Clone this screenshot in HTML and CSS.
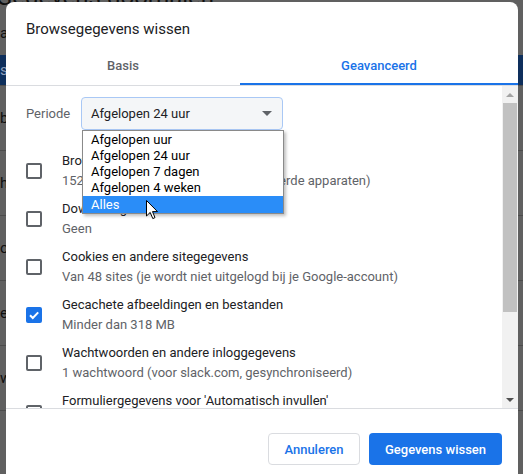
FILE: index.html
```html
<!DOCTYPE html>
<html lang="nl">
<head>
    <meta charset="UTF-8">
    <title>Browsegegevens wissen</title>
    <link rel="stylesheet" href="styles.css">
</head>
<body>
    <div class="page">
        <h1 class="page-title">Gegevens doorhalen</h1>
        <div class="page-row page-row--first">accounts</div>
        <div class="page-row page-row--blue">sync</div>
        <div class="page-row">beheer</div>
        <div class="page-row">historie</div>
        <div class="page-row">opties</div>
        <div class="page-row">extra</div>
        <div class="page-row">wachtwoorden</div>
    </div>

    <div class="dialog">
        <div class="dialog-title">Browsegegevens wissen</div>

        <div class="tabs">
            <div class="tab tab--basic">Basis</div>
            <div class="tab tab--active">Geavanceerd</div>
        </div>

        <div class="dialog-body">
            <div class="content">
                <div class="period">
                    <span class="period-label">Periode</span>
                    <div class="select">
                        <span>Afgelopen 24 uur</span>
                        <span class="select-arrow"></span>
                        <ul class="options">
                            <li>Afgelopen uur</li>
                            <li>Afgelopen 24 uur</li>
                            <li>Afgelopen 7 dagen</li>
                            <li>Afgelopen 4 weken</li>
                            <li class="selected">Alles</li>
                        </ul>
                        <svg class="cursor" width="13" height="20" viewBox="0 0 13 20">
                            <path d="M0.5 0.5 L0.5 16 L4.2 12.4 L6.8 18.6 L9 17.6 L6.5 11.6 L11.5 11.6 Z" fill="#fff" stroke="#000" stroke-width="1"/>
                        </svg>
                    </div>
                </div>

                <div class="item">
                    <span class="checkbox"></span>
                    <div class="item-text">
                        <div class="item-title">Browsegeschiedenis</div>
                        <div class="item-sub">152 items (en meer op gesynchroniseerde apparaten)</div>
                    </div>
                </div>
                <div class="item">
                    <span class="checkbox"></span>
                    <div class="item-text">
                        <div class="item-title">Downloadgeschiedenis</div>
                        <div class="item-sub">Geen</div>
                    </div>
                </div>
                <div class="item">
                    <span class="checkbox"></span>
                    <div class="item-text">
                        <div class="item-title">Cookies en andere sitegegevens</div>
                        <div class="item-sub">Van 48 sites (je wordt niet uitgelogd bij je Google-account)</div>
                    </div>
                </div>
                <div class="item">
                    <span class="checkbox checkbox--checked">
                        <svg width="12" height="12" viewBox="0 0 12 12">
                            <path d="M2 6.2 L4.8 9 L10.2 3.4" fill="none" stroke="#fff" stroke-width="2"/>
                        </svg>
                    </span>
                    <div class="item-text">
                        <div class="item-title">Gecachete afbeeldingen en bestanden</div>
                        <div class="item-sub">Minder dan 318 MB</div>
                    </div>
                </div>
                <div class="item">
                    <span class="checkbox"></span>
                    <div class="item-text">
                        <div class="item-title">Wachtwoorden en andere inloggegevens</div>
                        <div class="item-sub">1 wachtwoord (voor slack.com, gesynchroniseerd)</div>
                    </div>
                </div>
                <div class="item">
                    <span class="checkbox"></span>
                    <div class="item-text">
                        <div class="item-title">Formuliergegevens voor 'Automatisch invullen'</div>
                    </div>
                </div>
            </div>

            <div class="scrollbar">
                <span class="scroll-arrow scroll-arrow--up"></span>
                <div class="scroll-track">
                    <div class="scroll-thumb"></div>
                </div>
                <span class="scroll-arrow scroll-arrow--down"></span>
            </div>
        </div>

        <div class="dialog-footer">
            <button class="btn btn--cancel">Annuleren</button>
            <button class="btn btn--primary">Gegevens wissen</button>
        </div>
    </div>
</body>
</html>
```

FILE: styles.css
```css
:root {
    --blue: #1a73e8;
    --text: #202124;
    --muted: #5f6368;
    --line: #dadce0;
}

body {
    margin: 0;
    width: 523px;
    height: 474px;
    overflow: hidden;
    background: #606060;
    font-family: Roboto, "Liberation Sans", sans-serif;
    position: relative;
}

/* dimmed settings page behind the dialog */
.page {
    height: 474px;
    overflow: hidden;
    color: #0f0f0f;
}

.page-title {
    margin: -17px 0 0 -4px;
    height: 28px;
    font-size: 24px;
    font-weight: 400;
    line-height: 28px;
    color: #101010;
}

.page-row {
    height: 64px;
    border-bottom: 1px solid #4c4c4c;
    font-size: 15px;
    line-height: 64px;
}

.page-row--first {
    height: 44px;
    line-height: 44px;
    border-bottom: none;
}

.page-row--blue {
    height: 30px;
    line-height: 30px;
    background: #0e2f5c;
    color: #8d9fbb;
}

/* dialog */
.dialog {
    position: absolute;
    top: 2px;
    left: 6px;
    width: 512px;
    height: 472px;
    background: #fff;
    border-radius: 8px 8px 0 0;
    display: flex;
    flex-direction: column;
    overflow: hidden;
}

.dialog-title {
    padding: 17px 20px 7px;
    font-size: 15px;
    line-height: 20px;
    color: var(--text);
}

.tabs {
    display: flex;
    height: 39px;
    border-bottom: 1px solid var(--line);
}

.tab {
    display: flex;
    align-items: center;
    justify-content: center;
    font-size: 13px;
    font-weight: 500;
    color: var(--muted);
    border-bottom: 2px solid transparent;
    padding-top: 1px;
}

.tab--basic {
    width: 234px;
}

.tab--active {
    flex: 1;
    color: var(--blue);
    border-bottom-color: var(--blue);
}

.dialog-body {
    display: flex;
    height: 322px;
    flex-shrink: 0;
    border-bottom: 1px solid var(--line);
}

.content {
    flex: 1;
    overflow: hidden;
}

.period {
    display: flex;
    align-items: center;
    padding: 11px 0 0 20px;
    height: 33px;
    margin-bottom: 17px;
}

.period-label {
    width: 55px;
    font-size: 13px;
    color: var(--muted);
}

.select {
    position: relative;
    box-sizing: border-box;
    width: 202px;
    height: 33px;
    padding: 0 9px;
    display: flex;
    align-items: center;
    justify-content: space-between;
    background: #f4f6f8;
    border: 1px solid #a9c8f5;
    border-radius: 4px;
    font-size: 13px;
    color: var(--text);
}

.select-arrow {
    margin-right: 1px;
    border-left: 5px solid transparent;
    border-right: 5px solid transparent;
    border-top: 5px solid var(--muted);
}

.options {
    position: absolute;
    top: 32px;
    left: 0;
    width: 200px;
    margin: 0;
    padding: 1px 0 0;
    list-style: none;
    background: #fff;
    border: 1px solid #8a8a8a;
    box-shadow: 2px 2px 3px rgba(0, 0, 0, 0.25);
    z-index: 2;
}

.options li {
    height: 16px;
    line-height: 16px;
    padding-left: 8px;
    font-size: 13px;
    color: #000;
}

.options li.selected {
    height: 17px;
    line-height: 17px;
    background: #2a8df8;
    color: #fff;
}

.cursor {
    position: absolute;
    left: 64px;
    top: 102px;
    z-index: 3;
}

.item {
    display: flex;
    align-items: center;
    height: 48px;
    padding-left: 20px;
    gap: 20px;
}

.checkbox {
    box-sizing: border-box;
    width: 16px;
    height: 16px;
    border: 2px solid var(--muted);
    border-radius: 2px;
    flex-shrink: 0;
    display: flex;
    align-items: center;
    justify-content: center;
}

.checkbox--checked {
    background: var(--blue);
    border-color: var(--blue);
}

.item-title,
.item-sub {
    font-size: 13px;
    line-height: 20px;
    color: var(--text);
    white-space: nowrap;
}

.item-sub {
    color: var(--muted);
}

.item:last-child {
    align-items: flex-start;
    padding-top: 4px;
    box-sizing: border-box;
}

.item:last-child .checkbox {
    margin-top: 14px;
}

.scrollbar {
    width: 16px;
    background: #f1f1f1;
    display: flex;
    flex-direction: column;
    align-items: center;
}

.scroll-arrow {
    width: 0;
    height: 0;
    border-left: 4px solid transparent;
    border-right: 4px solid transparent;
    margin: 7px 0 6px;
}

.scroll-arrow--up {
    border-bottom: 4px solid #a3a3a3;
}

.scroll-arrow--down {
    border-top: 4px solid #505050;
}

.scroll-track {
    flex: 1;
    width: 100%;
}

.scroll-thumb {
    margin: 0 1px;
    height: 209px;
    background: #c1c1c1;
}

.dialog-footer {
    display: flex;
    justify-content: flex-end;
    gap: 9px;
    padding: 24px 16px 0 0;
}

.btn {
    height: 32px;
    padding: 0;
    border-radius: 4px;
    font-family: inherit;
    font-size: 13px;
    font-weight: 500;
    white-space: nowrap;
}

.btn--cancel {
    width: 92px;
    background: #fff;
    color: var(--blue);
    border: 1px solid var(--line);
}

.btn--primary {
    width: 133px;
    background: var(--blue);
    color: #fff;
    border: none;
}
```
